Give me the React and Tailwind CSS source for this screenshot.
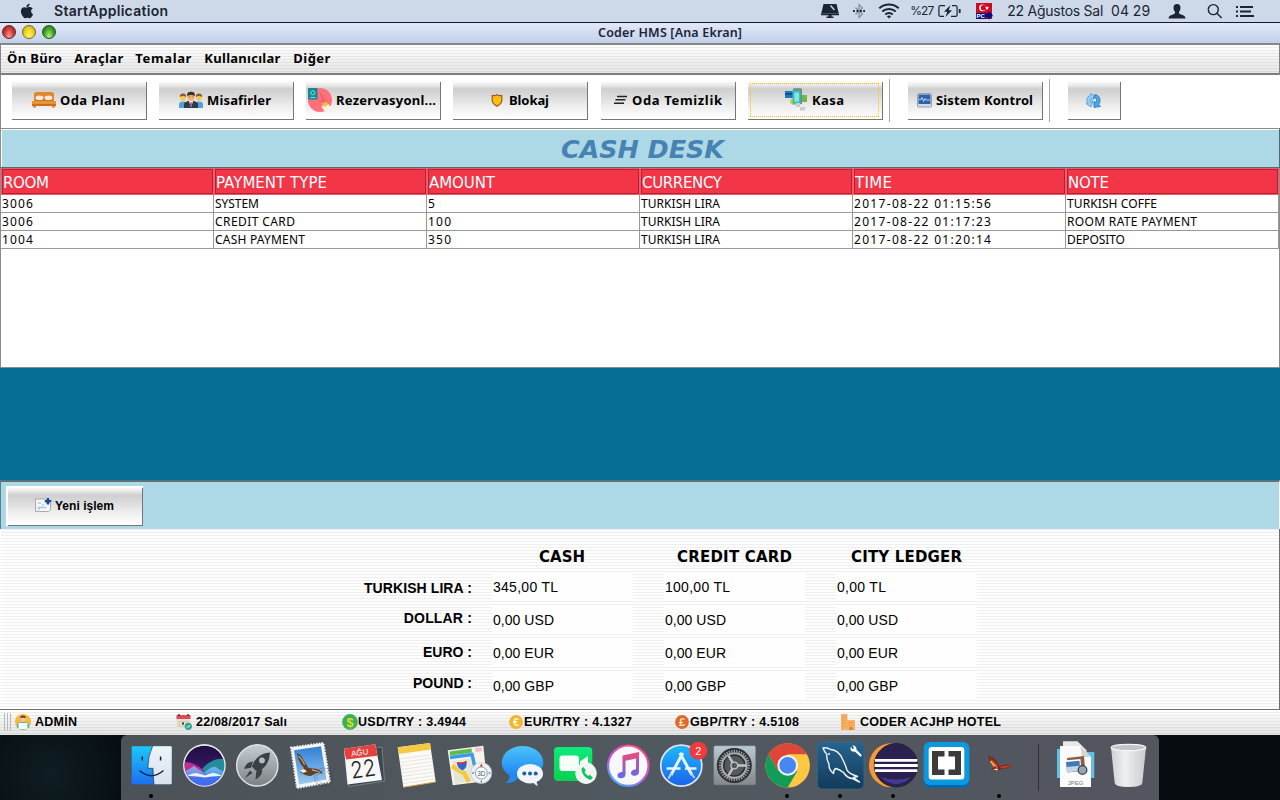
import React, { useLayoutEffect, useRef, useState } from "react";

const LUCIDA = "font-['Noto_Sans','Open_Sans',sans-serif]";
const VERDANA = "font-['DejaVu_Sans',sans-serif]";
const ARIAL = "font-['Liberation_Sans',Arial,sans-serif]";
const SYSTEM = "font-[Inter,Roboto,sans-serif]";

/* A label whose tracking is set so that it fills exactly `w` pixels. */
function Label({ w, className = "", children }) {
  const ref = useRef(null);
  const [spacing, setSpacing] = useState(0);
  useLayoutEffect(() => {
    const natural = ref.current.getBoundingClientRect().width;
    setSpacing((w - natural) / Math.max(1, String(children).length - 1));
  }, []);
  return (
    <span ref={ref} className={"inline-block shrink-0 whitespace-pre " + className} style={{ letterSpacing: spacing + "px" }}>
      {children}
    </span>
  );
}

/* ---------- system menu bar ---------- */

function MenuBar() {
  return (
    <header className={"flex h-[23px] items-center border-b border-[#101b30] bg-[#cdd9e8] pl-5 text-[#1b2431] " + SYSTEM}>
      <svg className="h-[16px] w-[14px] shrink-0" viewBox="0 0 14 16" fill="#1b2431">
        <path d="M9.6 0.6c.1 1.2-.4 2-1 2.700-.6.700-1.400 1.100-2.200 1-.1-1 .4-1.900.9-2.500C7.900 1.100 8.800.700 9.600.6zM12.700 5.600c-1 .6-1.600 1.500-1.600 2.700 0 1.400.8 2.400 2 2.900-.3.900-.8 1.800-1.400 2.600-.6.800-1.200 1.500-2.100 1.500-.9 0-1.200-.5-2.200-.5s-1.400.5-2.200.5c-.9 0-1.600-.8-2.200-1.700C1.800 12 .9 10 .9 8.200c0-2.600 1.700-4 3.300-4 .9 0 1.700.6 2.500.6.7 0 1.600-.7 2.800-.7 1.200 0 2.400.5 3.200 1.500z" />
      </svg>
      <Label w={114} className="ml-[20px] text-[14px] leading-[22px] font-semibold">StartApplication</Label>
      <svg className="ml-[653px] h-[16px] w-[18px] shrink-0" viewBox="0 0 18 16" fill="#1b2431">
        <path d="M2.500 1h13l2.300 9.500H.2z" />
        <path d="M0 10.500h18v1.700H0zM7.500 12h3v2h-3zM5.500 13.500h7V15h-7z" />
        <path d="M9.500 2.500l4 4.500" stroke="#cdd9e8" strokeWidth="1.400" />
      </svg>
      <svg className="ml-[14px] h-[16px] w-[12px] shrink-0" viewBox="0 0 12 16" fill="none" stroke="#7c8899" strokeWidth="1.100">
        <path d="M2.500 4.500l7 6.500L6 14.500v-13l3.500 3.500-7 6.500" />
        <path d="M0 8h1.800M3.500 8h1.800M7 8h1.800M10.200 8H12" stroke="#1b2431" strokeWidth="2" />
      </svg>
      <svg className="ml-[13px] h-[16px] w-[22px] shrink-0" viewBox="0 0 22 16" fill="none" stroke="#1b2431" strokeWidth="2">
        <path d="M1.300 5.200c5.500-5 13.900-5 19.400 0" />
        <path d="M4.300 8.500c3.800-3.400 9.600-3.400 13.400 0" />
        <path d="M7.300 11.600c2.200-1.900 5.200-1.900 7.400 0" />
        <path d="M8.800 13.200l2.200 2.300 2.200-2.300c-1.300-1.100-3.100-1.100-4.400 0z" fill="#1b2431" stroke="none" />
      </svg>
      <Label w={24} className="ml-[10px] text-[12px] leading-[22px]">%27</Label>
      <svg className="ml-[5px] h-[14px] w-[23px] shrink-0" viewBox="0 0 23 14" fill="none" stroke="#1b2431" strokeWidth="1.200">
        <path d="M7 1.600H2.500Q.9 1.600.9 3v8q0 1.400 1.600 1.400H6M14 1.600h3.500q1.600 0 1.600 1.400v8q0 1.400-1.600 1.400H13" />
        <path d="M12.500 1L6 7.800h3.300L7.500 13 14 6.200h-3.300z" fill="#1b2431" stroke="none" />
        <path d="M21.700 5v4" strokeWidth="1.800" />
      </svg>
      <svg className="ml-[15px] h-[17px] w-[17px] shrink-0" viewBox="0 0 17 17">
        <path d="M0 0h16v16H0z" fill="#d00a20" />
        <circle cx="6.500" cy="4.800" r="3.400" fill="#fff" />
        <circle cx="7.500" cy="4.800" r="2.700" fill="#d00a20" />
        <path d="M11 2.800l.6 1.400 1.500.1-1.200.9.400 1.500-1.300-.8-1.300.8.400-1.500-1.100-.9 1.500-.1z" fill="#fff" />
        <path d="M0 10h10v6H0z" fill="#0a0f86" />
        <text x="0.500" y="15.300" fontSize="6" fontWeight="700" fill="#fff" fontFamily="Liberation Sans, sans-serif">PC</text>
        <path d="M13 8.500l1.500 1.500 1.500 1 .8 1.500-.8 1.500-1.500 1-1.500 1.500-1.500-1.500-1.500-1-.8-1.500.8-1.500 1.500-1z" fill="#0a0f86" />
      </svg>
      <Label w={96} className="ml-[14px] text-[14px] leading-[22px]">22 Ağustos Sal</Label>
      <Label w={39} className="ml-[8px] text-[14px] leading-[22px]">04 29</Label>
      <svg className="ml-[18px] h-[17px] w-[18px] shrink-0" viewBox="0 0 18 17" fill="#1b2431">
        <path d="M9 1c2.400 0 3.600 1.600 3.500 4-.1 1.900-.8 3.200-1.600 4 .1 1.700.6 2 2.800 2.700 2.200.7 3.600 1.500 3.800 3.800H.5c.2-2.300 1.600-3.100 3.800-3.800 2.200-.7 2.700-1 2.800-2.700-.8-.8-1.500-2.100-1.600-4C5.400 2.600 6.600 1 9 1z" />
      </svg>
      <svg className="ml-[21px] h-[16px] w-[16px] shrink-0" viewBox="0 0 16 16" fill="none" stroke="#1b2431" strokeWidth="1.400">
        <circle cx="6.300" cy="6.600" r="5" />
        <path d="M9.900 10.200l4.800 4.800" />
      </svg>
      <svg className="ml-[13px] h-[14px] w-[18px] shrink-0" viewBox="0 0 18 14" stroke="#1b2431" strokeWidth="2">
        <path d="M0 3h2M4 3h13M0 7.500h2M4 7.500h11M0 12h2M4 12h14" />
      </svg>
    </header>
  );
}

/* ---------- window chrome ---------- */

function TitleBar() {
  return (
    <div className="grid h-[20px] grid-cols-[598px_1fr] items-center bg-linear-to-b from-[#e3e9f8] to-[#c0d0ea]">
      <div className="flex items-center gap-[6px] pb-[2px] pl-[2px]">
        <span className="h-[14px] w-[14px] rounded-full border border-[#6d2020] bg-[radial-gradient(ellipse_at_50%_85%,#ff9a90_0%,#d34040_50%,#a32828_80%)]" />
        <span className="h-[14px] w-[14px] rounded-full border border-[#7d6a16] bg-[radial-gradient(ellipse_at_50%_85%,#fff36b_0%,#efd62f_50%,#c9a723_85%)]" />
        <span className="h-[14px] w-[14px] rounded-full border border-[#1e5a16] bg-[radial-gradient(ellipse_at_50%_85%,#b4f27a_0%,#4ea52f_50%,#2a7a20_80%)]" />
      </div>
      <Label w={144} className={"justify-self-start text-[12.500px] leading-[18px] font-semibold text-[#1c2536] " + LUCIDA}>Coder HMS [Ana Ekran]</Label>
    </div>
  );
}

const stripes = "bg-[linear-gradient(to_bottom,transparent_2px,#0000000f_2px)] bg-[length:100%_3px]";

function AppMenu() {
  const cls = "text-[13px] leading-[26px] font-bold text-black " + LUCIDA;
  return (
    <div className="h-[32px] border-x border-t-2 border-b-2 border-x-[#858585] border-t-[#858585] border-b-[#7d7d7d] bg-linear-to-b from-white to-[#e6e6e6]">
      <nav className={"flex h-full items-center pb-[2px] pl-[6px] " + stripes}>
        <Label w={55} className={cls}>Ön Büro</Label>
        <div className="flex w-[68px] shrink-0 pl-[12px]"><Label w={49} className={cls}>Araçlar</Label></div>
        <div className="flex w-[69px] shrink-0 pl-[5px]"><Label w={56} className={cls}>Temalar</Label></div>
        <div className="flex w-[89px] shrink-0 pl-[5px]"><Label w={76} className={cls}>Kullanıcılar</Label></div>
        <div className="flex shrink-0 pl-[5px]"><Label w={37} className={cls}>Diğer</Label></div>
      </nav>
    </div>
  );
}

/* ---------- toolbar ---------- */

const metal =
  "border-r border-b border-[#767676] bg-[linear-gradient(to_bottom,#f8f8f8_0%,#e9e9e9_9%,#cfcfcf_19%,#d6d6d6_32%,#ebebeb_62%,#f8f8f8_86%,#fff_100%)]";

function ToolButton({ className, children }) {
  return <button className={"relative flex h-[38px] shrink-0 items-center pb-px text-[13px] leading-[34px] font-bold text-black " + metal + " " + LUCIDA + " " + className}>{children}</button>;
}

function BedIcon() {
  return (
    <svg className="h-[24px] w-[24px] shrink-0" viewBox="0 0 24 24">
      <path d="M3.500 4h17l1.500 1.500V14H2V5.500z" fill="#e2882c" />
      <path d="M3 9q4.500-4 9 0 4.500-4 9 0v4H3z" fill="#d8761c" />
      <path d="M0 13h24v3H0z" fill="#e8923a" />
      <path d="M0 16h24v2H0z" fill="#c9701c" />
      <path d="M1 18h3v1.500H1zM20 18h3v1.500h-3z" fill="#e2882c" />
      <ellipse cx="7.500" cy="9.800" rx="4" ry="2.300" fill="#fbe9de" />
      <ellipse cx="16.500" cy="9.800" rx="4" ry="2.300" fill="#fbe9de" />
    </svg>
  );
}

function GuestsIcon() {
  return (
    <svg className="h-[24px] w-[24px] shrink-0" viewBox="0 0 24 24">
      <path d="M0 20v-4q0-2.500 4-2.500t4 2.500v4zM16 20v-4q0-2.500 4-2.500t4 2.500v4z" fill="#4fa3d8" />
      <ellipse cx="4" cy="9.500" rx="2.900" ry="3.700" fill="#f8c95c" />
      <ellipse cx="20" cy="9.500" rx="2.900" ry="3.700" fill="#f8c95c" />
      <path d="M.9 9Q.5 5.500 4 5.500T7.100 9Q4 7 .9 9zM16.900 9Q16.500 5.500 20 5.500T23.100 9Q20 7 16.900 9z" fill="#8a5a30" />
      <path d="M5 20v-4q0-2.500 7-3.500 7 1 7 3.500v4z" fill="#2d3b52" />
      <path d="M9.800 12.500h4.400L12 19.500z" fill="#fff" />
      <path d="M11.500 14h1l.5 3-1 1.500-1-1.500z" fill="#c33" />
      <ellipse cx="12" cy="8.500" rx="3.600" ry="4.500" fill="#f8b878" />
      <path d="M8.200 8Q7.500 3.800 12 3.800T15.800 8Q12 5.800 8.200 8z" fill="#3a2f2a" />
      <path d="M9.200 9h2.200M12.600 9h2.200" stroke="#a06a40" strokeWidth=".8" />
    </svg>
  );
}

function ReservationIcon() {
  return (
    <svg className="h-[24px] w-[24px] shrink-0" viewBox="0 0 24 24">
      <circle cx="12" cy="12" r="12" fill="#ff7078" />
      <path d="M12 6q3 0 3 7h3M11 13h3" fill="none" stroke="#e05560" />
      <path d="M0 0h9.500v11.500H0z" fill="#168a99" />
      <circle cx="4.800" cy="4.800" r="2" fill="none" stroke="#8adbd2" />
      <path d="M2.500 9.500h5" stroke="#8adbd2" />
      <path d="M13.500 19l3-4 4 1 2 3-2 4-4 0z" fill="#fff1e6" />
      <path d="M14 16l4-2.500 2 3-3 2.500z" fill="#f9ba35" />
    </svg>
  );
}

function KasaIcon() {
  return (
    <svg className="h-[24px] w-[23px] shrink-0" viewBox="0 0 23 24">
      <path d="M0 3h10v7H0z" fill="#1b78be" />
      <path d="M0 5h9v1.800H0z" fill="#12507f" />
      <circle cx="8" cy="13.500" r="3" fill="#f5bd2f" />
      <path d="M14 7h8v7h-8z" fill="#70b84a" />
      <path d="M8 1.500Q8 .3 9.500.3h6q1.500 0 1.500 1.500V16H8z" fill="#6f8a94" />
      <path d="M7.500 2.500h8v14h-8z" fill="#35c5b8" />
      <path d="M9.500 4.500h4.500v9H9.500z" fill="#8ce5dc" />
      <path d="M11 15h4v4h-4zM15 19h5v3.500h-5z" fill="#cdcdcd" />
    </svg>
  );
}

function Separator({ className }) {
  return <span className={"mt-[-3px] h-[43px] w-px shrink-0 bg-[#a8a8a8] " + className} />;
}

function Toolbar() {
  return (
    <div className="flex h-[53px] items-start border-l border-[#8c8c8c] bg-white pt-[7px] pl-[11px]">
      <ToolButton className="w-[135px] gap-[4px] pl-[20px]"><BedIcon /><Label w={65}>Oda Planı</Label></ToolButton>
      <ToolButton className="ml-[12px] w-[135px] gap-[4px] pl-[20px]"><GuestsIcon /><Label w={64}>Misafirler</Label></ToolButton>
      <ToolButton className="ml-[12px] w-[135px] gap-[4px] pl-[2px]"><ReservationIcon /><Label w={100}>Rezervasyonl...</Label></ToolButton>
      <ToolButton className="ml-[12px] w-[135px] gap-[6px] pl-[38px]">
        <svg className="h-[13px] w-[12px] shrink-0" viewBox="0 0 12 13">
          <path d="M6 .7l2 1h2.800v4.600q0 3.500-4.800 6-4.800-2.500-4.800-6V1.700H4z" fill="#fbbf10" stroke="#9a5a1c" strokeWidth="1.200" />
        </svg>
        <Label w={40}>Blokaj</Label>
      </ToolButton>
      <ToolButton className="ml-[13px] w-[135px] gap-[5px] pl-[13px]">
        <svg className="h-[10px] w-[13px] shrink-0" viewBox="0 0 13 10" stroke="#222" strokeWidth="1.500">
          <path d="M3 1.500h10M1.500 4.800h10M0 8.200h10" />
        </svg>
        <Label w={90}>Oda Temizlik</Label>
      </ToolButton>
      <ToolButton className="ml-[12px] w-[135px] gap-[4px] pl-[37px]">
        <KasaIcon />
        <Label w={32}>Kasa</Label>
        <svg className="absolute top-px left-[2px] h-[34px] w-[129px]" viewBox="0 0 129 34" shapeRendering="crispEdges">
          <path d="M0 .5h129M0 33.500h129M.5 0v34M128.500 0v34" stroke="#fcc100" strokeDasharray="1 1" />
        </svg>
      </ToolButton>
      <Separator className="ml-[6px]" />
      <ToolButton className="ml-[18px] w-[135px] gap-[4px] pl-[9px]">
        <svg className="h-[15px] w-[15px] shrink-0" viewBox="0 0 15 15">
          <rect x=".5" y=".5" width="14" height="13.500" rx="1" fill="#d3d8e2" stroke="#9aa2b2" />
          <path d="M1.500 1.500h12v9.500h-12z" fill="#2b62a8" />
          <path d="M2 6.500h2l1-2 1.500 4 1.500-3 1 1.500h4" fill="none" stroke="#d6f0ff" strokeWidth=".8" />
        </svg>
        <Label w={97}>Sistem Kontrol</Label>
      </ToolButton>
      <Separator className="ml-[6px]" />
      <ToolButton className="ml-[18px] w-[53px] pl-[18px]">
        <svg className="h-[15px] w-[15px] shrink-0" viewBox="0 0 15 15">
          <path d="M4.500 .8L9.500 3 6 7.500 5.300 5.500Q3 6.800 4.500 9L7 8.500 5 14 0 10.500 1.500 10Q-1 5 4 2.500z" fill="#8fd0f5" stroke="#3c90cc" strokeWidth=".7" />
          <path d="M9 1.500q5 1 5 6 0 2.200-1.300 3.800l1.800 2.200-6.500 1V8.300l2 1.500q1.700-2.800-.5-5L7.500 5z" fill="#4ba7e6" stroke="#1d66ac" strokeWidth=".7" />
        </svg>
      </ToolButton>
    </div>
  );
}

/* ---------- cash desk ---------- */

const columns = [["ROOM", 46], ["PAYMENT TYPE", 111], ["AMOUNT", 66], ["CURRENCY", 80], ["TIME", 37], ["NOTE", 41]];
const rows = [
  [["3006", 31], ["SYSTEM", 44], ["5", 7], ["TURKISH LIRA", 79], ["2017-08-22 01:15:56", 137], ["TURKISH COFFE", 90]],
  [["3006", 31], ["CREDIT CARD", 80], ["100", 23], ["TURKISH LIRA", 79], ["2017-08-22 01:17:23", 137], ["ROOM RATE PAYMENT", 130]],
  [["1004", 31], ["CASH PAYMENT", 90], ["350", 23], ["TURKISH LIRA", 79], ["2017-08-22 01:20:14", 137], ["DEPOSITO", 58]],
];

function CashTable() {
  return (
    <section className="h-[200px] border-x border-b border-[#8c8c8c] bg-white">
      <div className="grid grid-cols-[repeat(6,213px)] bg-[#f23648]">
        {columns.map(([name, w]) => (
          <div key={name} className="flex h-[27px] items-center border border-[#ff5566]">
            <div className="flex h-full w-full items-center border border-[#a92634] pt-[3px]">
              <Label w={w} className={"text-[15px] leading-[22px] text-white " + VERDANA}>{name}</Label>
            </div>
          </div>
        ))}
      </div>
      {rows.map((row, i) => (
        <div key={i} className="grid grid-cols-[repeat(6,213px)]">
          {row.map(([text, w], j) => (
            <div key={j} className="flex h-[18px] items-center border-r border-b border-[#999] pl-[1px]">
              <Label w={w} className={"text-[12px] leading-[17px] text-black " + LUCIDA}>{text}</Label>
            </div>
          ))}
        </div>
      ))}
    </section>
  );
}

const totals = [
  ["TURKISH LIRA :", 108, [["345,00 TL", 65], ["100,00 TL", 65], ["0,00 TL", 49]], "pt-[3px]"],
  ["DOLLAR :", 68, [["0,00 USD", 61], ["0,00 USD", 61], ["0,00 USD", 61]], "pb-[3px]"],
  ["EURO :", 49, [["0,00 EUR", 61], ["0,00 EUR", 61], ["0,00 EUR", 61]], "pb-[1px]"],
  ["POUND :", 59, [["0,00 GBP", 61], ["0,00 GBP", 61], ["0,00 GBP", 61]], "pb-[5px]"],
];

function Totals() {
  return (
    <section className="h-[181px] border-r border-b border-[#6f6f6f] bg-[#fefefe] pl-px">
      <div className={"h-[180px] bg-[position:0_1px] pt-[18px] " + stripes}>
        <div className="flex h-[20px] items-center">
          {[["CASH", 46, "ml-[538px] w-[138px]"], ["CREDIT CARD", 115, "w-[174px]"], ["CITY LEDGER", 111, ""]].map(([t, w, c]) => (
            <div key={t} className={"flex shrink-0 " + c}>
              <Label w={w} className={"text-[15px] leading-[20px] font-bold text-black " + VERDANA}>{t}</Label>
            </div>
          ))}
        </div>
        <div className="mt-[5px] flex flex-col gap-[4px]">
          {totals.map(([name, w, values, shift]) => (
            <div key={name} className={"grid h-[29px] grid-cols-[471px_141px_141px_141px] items-center text-black " + ARIAL}>
              <div className={"flex justify-end " + shift}>
                <Label w={w} className="text-[14px] leading-[20px] font-bold">{name}</Label>
              </div>
              {values.map(([v, vw], i) => (
                <div key={i} className={"flex h-[29px] items-center bg-[#fefefe] pl-px " + ["translate-x-[20px]", "translate-x-[51px]", "translate-x-[82px]"][i]}>
                  <Label w={vw} className="text-[14px] leading-[20px]">{v}</Label>
                </div>
              ))}
            </div>
          ))}
        </div>
      </div>
    </section>
  );
}

/* ---------- status bar ---------- */

function Coin({ sign, fill, ink, size }) {
  return (
    <svg className={"shrink-0 " + size} viewBox="0 0 16 16">
      <circle cx="8" cy="8" r="7.900" fill={fill} />
      <text x="8" y="12.500" textAnchor="middle" fontSize="12.500" fontWeight="700" fill={ink} fontFamily="Liberation Sans, sans-serif">{sign}</text>
    </svg>
  );
}

function StatusBar() {
  const item = "flex shrink-0 items-center ";
  return (
    <footer className="h-[25px] bg-linear-to-b from-white to-[#e4e4e4]">
      <div className={"flex h-full items-center pb-px pl-[4px] text-[12.500px] leading-[22px] font-bold text-black " + stripes + " " + ARIAL}>
        <div className="flex w-[11px] shrink-0 gap-[2px]">
          {[0, 1, 2].map((i) => <span key={i} className="h-[18px] w-px bg-[#b9b9b9]" />)}
        </div>
        <div className={item + "w-[161px] gap-[4px]"}>
          <svg className="h-[16px] w-[16px] shrink-0" viewBox="0 0 16 16">
            <circle cx="8" cy="8" r="8" fill="#fbb738" />
            <path d="M2 14V10.500Q2 8 8 8t6 2.500V14q-6 3-12 0z" fill="#3dbb9f" />
            <circle cx="8" cy="5" r="2.700" fill="#f0c39c" />
            <path d="M5.300 4Q5 1.500 8 1.500T10.700 4Q8 2.800 5.300 4z" fill="#4d3b30" />
            <path d="M3.500 9h9v6h-9z" fill="#f7fbff" />
          </svg>
          <Label w={42}>ADMİN</Label>
        </div>
        <div className={item + "w-[166px] gap-[4px]"}>
          <svg className="h-[16px] w-[16px] shrink-0" viewBox="0 0 16 16">
            <path d="M.5 1h14v13.500H.5z" fill="#e6e0d0" />
            <path d="M.5 1h14v4H.5z" fill="#dd4b5a" />
            <path d="M3 0v2M12 0v2" stroke="#5a3038" strokeWidth="1.500" />
            <path d="M3 7.500h9v4.500H3z" fill="none" stroke="#cfc8b6" />
            <path d="M6 9.500h2" stroke="#333" strokeWidth="2" />
            <circle cx="12.300" cy="12.300" r="3.600" fill="#2aa890" />
            <path d="M10.700 12.300l1.200 1.200 2-2.300" fill="none" stroke="#fff" />
          </svg>
          <Label w={91}>22/08/2017 Salı</Label>
        </div>
        <div className={item + "w-[167px]"}>
          <Coin sign="$" fill="#3fae5c" ink="#d9e021" size="h-[16px] w-[16px]" />
          <Label w={108}>USD/TRY : 3.4944</Label>
        </div>
        <div className={item + "w-[166px] gap-px"}>
          <Coin sign="€" fill="#f2b632" ink="#fff7cf" size="h-[14px] w-[14px]" />
          <Label w={108}>EUR/TRY : 4.1327</Label>
        </div>
        <div className={item + "w-[166px] gap-px"}>
          <Coin sign="£" fill="#dd6a2c" ink="#ffe9d2" size="h-[14px] w-[14px]" />
          <Label w={109}>GBP/TRY : 4.5108</Label>
        </div>
        <div className={item + "gap-[5px]"}>
          <svg className="h-[16px] w-[14px] shrink-0" viewBox="0 0 14 16">
            <path d="M0 0h6.500v16H0zM6 6h8v10H6z" fill="#f5b068" />
            <path d="M1.500 3h3.500M1.500 6h3.500M1.500 9h3.500M1.500 12h3.500M7.500 8.500h5M7.500 11h5" stroke="#f08f2e" strokeWidth="1.200" strokeDasharray="1.500 .8" />
            <path d="M8.500 13h3v3h-3z" fill="#e07f22" />
          </svg>
          <Label w={141}>CODER ACJHP HOTEL</Label>
        </div>
      </div>
    </footer>
  );
}

/* ---------- dock ---------- */

function Slot({ running, children }) {
  return (
    <svg className="h-[65px] w-[53px] shrink-0" viewBox="0 0 53 65">
      {children}
      {running && <circle cx="26" cy="61" r="2" fill="#000" />}
    </svg>
  );
}

function Gradient({ id, from, to }) {
  return (
    <linearGradient id={id} x1="0" y1="0" x2="0" y2="1">
      <stop offset="0" stopColor={from} />
      <stop offset="1" stopColor={to} />
    </linearGradient>
  );
}

const sans = "Liberation Sans, sans-serif";
const gearTeeth = Array.from({ length: 36 }, (_, i) => i * 10);

function Dock() {
  return (
    <div className="flex h-[65px] bg-[#060c10] bg-[radial-gradient(circle_at_50px_40px,#0f1d22_0px,transparent_90px)] pl-[121px]">
      <div className="flex w-[1038px] rounded-t-[6px] bg-linear-to-r from-[#4d5259] via-[#50595f] to-[#53555f] pl-[4px]">
        <Slot running>
          <defs>
            <Gradient id="finder" from="#1bc8fb" to="#1d6ff0" />
            <Gradient id="finderR" from="#eef3f9" to="#d9e2ee" />
          </defs>
          <rect x="6.700" y="11.300" width="40" height="38" rx="1" fill="url(#finder)" />
          <path d="M27.700 11.300h18q1 0 1 1v36q0 1-1 1H29q-.8-6.500-1-16h-5q-.3-12 4.700-22z" fill="url(#finderR)" />
          <path d="M27.500 11.300q-4.800 10-4.500 22h5q0 9 1 16" fill="none" stroke="#1d3550" strokeWidth=".7" />
          <path d="M17.300 21.500v4M35.600 21.500v4" stroke="#10243c" strokeWidth="1.500" />
          <path d="M14.500 35.500q12 10.500 24 0" fill="none" stroke="#10243c" strokeWidth="1.400" />
        </Slot>
        <Slot>
          <defs>
            <Gradient id="siri" from="#1d0f3c" to="#4a1c84" />
            <Gradient id="siriLow" from="#7fc8ff" to="#3d5cf0" />
            <clipPath id="siriClip"><circle cx="26.400" cy="30.400" r="20" /></clipPath>
          </defs>
          <circle cx="26.400" cy="30.400" r="21.300" fill="#e8ecf2" />
          <g clipPath="url(#siriClip)">
            <circle cx="26.400" cy="30.400" r="20" fill="url(#siri)" />
            <path d="M5 27q10-1 20 8l-4 8-16-2z" fill="#e0359b" opacity=".8" />
            <path d="M24 34q10-12 24-10v20l-18-4z" fill="#1fb5b0" opacity=".75" />
            <path d="M5 37q7-3 11-6 6 5 11 6 7-6 11-5 5 5 10 4v18H5z" fill="url(#siriLow)" opacity=".8" />
            <path d="M5 42q11-2 21 1 11-3 22-1v10H5z" fill="#3f6ef5" opacity=".8" />
            <path d="M9 41q5-3 9-3 6 1 9 2.500 6-3 9-2.500 5 1 8 3-9-.5-17 1.500-9-2-18-1.500z" fill="#f2fbff" opacity=".95" />
          </g>
        </Slot>
        <Slot>
          <defs><Gradient id="launch" from="#c6ced4" to="#7c8084" /></defs>
          <circle cx="26.300" cy="30.400" r="20.600" fill="url(#launch)" stroke="#dfe4e8" strokeWidth="1.400" />
          <g fill="#3a4047">
            <path d="M38.800 17.500q.5 10.500-8.500 17.500l-4 2-5.500-5.500 2-4.500q6-9 16-9.500z" />
            <path d="M22 26.500q-6.500 0-9 7.500l7-1.200zM31.300 34.800q.2 6-6.800 9.700l.7-7.700z" />
            <path d="M19 35.500l-5 7.500 7.500-5z" />
          </g>
          <circle cx="31" cy="25.500" r="2.900" fill="#b4bcc2" />
        </Slot>
        <Slot>
          <defs><Gradient id="mail" from="#2f7fd6" to="#9ccaf0" /></defs>
          <path d="M7 12.600L39.300 8 46 47l-33 6z" fill="#f6f6f4" stroke="#f6f6f4" strokeWidth="2" strokeDasharray="1.600 1.200" />
          <path d="M10 15.300l27-4 5.500 33.200-27.500 5z" fill="url(#mail)" />
          <path d="M13 18q5 2 7 8 3 4 4 6.500l4 1q7-.5 11 5l-7-.5-5 3q-6 0-11-4 3-1 4-4Q14 27 13 18z" fill="#5f4228" />
          <path d="M14.500 21q4 3 6 9M28 35q5 .5 8 2.500" stroke="#c3a078" strokeWidth="1.300" fill="none" />
          <path d="M16 35.500l4-1.500 3 2.500-4 1.500z" fill="#f4ece0" />
          <circle cx="39.500" cy="42" r="9" fill="none" stroke="#323c48" strokeOpacity=".35" />
          <circle cx="39.500" cy="42" r="6.500" fill="none" stroke="#323c48" strokeOpacity=".35" strokeDasharray="2 1" />
        </Slot>
        <Slot>
          <path d="M10 17l35-5 2.500 34-36 5.500z" fill="#3e484c" stroke="#7b8d92" strokeWidth=".8" />
          <path d="M7 13.700L38.300 9.300 45 45l-34.500 4.500z" fill="#f7f7f7" />
          <path d="M7 13.700L38.300 9.300l2 11.500L9 24.500z" fill="#e63f3f" />
          <g transform="rotate(-8 26 30)" fontFamily={sans} textAnchor="middle">
            <text x="24.500" y="20" fontSize="8" fill="#fff">AĞU</text>
            <text x="25.500" y="42" fontSize="23" fill="#222" fontFamily="Inter, sans-serif" fontWeight="300" textLength="25" lengthAdjust="spacingAndGlyphs">22</text>
          </g>
        </Slot>
        <Slot>
          <path d="M7.700 12.300L40 8l5.700 39-32.400 5.300z" fill="#fbfaf6" />
          <path d="M7.700 12.300L40 8l1 6.500L8.700 19z" fill="#f6c944" />
          <path d="M9.600 24l32.300-4.500M10 27.500L42.300 23M10.500 31l32.300-4.500M11 34.500L43.300 30M11.500 38l32.300-4.500M12 41.500L44.300 37M12.600 45l32.300-4.500M13 48.500L45.200 44" stroke="#dedcd6" strokeWidth=".7" />
          <path d="M13.300 52.300L45.700 47" stroke="#c9a040" />
        </Slot>
        <Slot>
          <path d="M4.700 15.300l35.600-4.600L44 46 9.700 50.300z" fill="#f6f3ea" />
          <path d="M6.500 16.500l22-3 .5 4-22 3z" fill="#5dbb4a" />
          <path d="M32 13l6.500-.8.6 4-6.500.8z" fill="#f2bcc8" />
          <path d="M7 22.500l22-3 3 13" fill="none" stroke="#3b9be8" strokeWidth="3.500" />
          <path d="M9 26l19-2.500L31 46l-19 3z" fill="#e3e6d6" />
          <path d="M9 31q8 5 12 7l5 9" fill="none" stroke="#f6c83c" strokeWidth="4.500" />
          <path d="M13.500 27q4.500 1.500 10-1.500 2.500 7-4 10.500Q13 33 13.500 27z" fill="#3366cc" stroke="#fff" strokeWidth=".8" />
          <path d="M13.800 27.800q5 1 9.800-1.300" stroke="#d33" strokeWidth="1.600" fill="none" />
          <circle cx="38.300" cy="38" r="10.500" fill="#eef0f3" stroke="#c0c4c9" strokeWidth=".6" />
          <circle cx="38.300" cy="38" r="6" fill="#fff" stroke="#6f9db4" strokeWidth=".9" />
          <text x="38.300" y="40.500" fontSize="6.500" fill="#555" textAnchor="middle" fontFamily={sans}>3D</text>
          <path d="M38.300 28.500l1.500 3h-3z" fill="#e03030" />
          <path d="M38.300 45.500v2M29 38h2M45.600 38h2" stroke="#555" />
        </Slot>
        <Slot>
          <defs><Gradient id="msg" from="#4cc3fb" to="#1a7ef2" /></defs>
          <ellipse cx="26.500" cy="27.500" rx="20.800" ry="16.500" fill="url(#msg)" />
          <path d="M14 39q0 6-4 9 8 0 12-5z" fill="#2589f4" />
          <ellipse cx="34" cy="38.700" rx="13" ry="9.700" fill="#f1f5f9" />
          <path d="M37 46q1 4 5 5-2-3-1-7z" fill="#f1f5f9" />
          <g fill="#17649e"><circle cx="28.300" cy="38.500" r="2" /><circle cx="34" cy="38.500" r="2" /><circle cx="39.700" cy="38.500" r="2" /></g>
        </Slot>
        <Slot>
          <defs><Gradient id="ft" from="#0ceb7c" to="#0bd050" /></defs>
          <rect x="5" y="12" width="38.300" height="34" rx="4" fill="url(#ft)" />
          <rect x="10.500" y="20.500" width="19.500" height="15.500" rx="3" fill="#f5fff8" />
          <path d="M31 26.500l8-5.500v14l-8-4z" fill="#f5fff8" />
          <circle cx="37" cy="38.300" r="10.700" fill="#f2f4f4" />
          <path d="M32.500 33.500l2-1.500 2.300 3.500-1.300 1.500q1.200 2.500 3.700 4l1.600-1.200 3 2.700-1.500 2q-2.500.8-6-2.500-3.800-3.500-3.800-8.500z" fill="#0fc55a" />
        </Slot>
        <Slot>
          <defs>
            <linearGradient id="itRing" x1=".8" y1="0" x2=".2" y2="1"><stop offset="0" stopColor="#fb4a6b" /><stop offset=".55" stopColor="#c653e8" /><stop offset="1" stopColor="#38b8fa" /></linearGradient>
            <Gradient id="itNote" from="#f34a7c" to="#5a6cf0" />
          </defs>
          <circle cx="26.300" cy="30.700" r="20.200" fill="#f8f8fb" stroke="url(#itRing)" strokeWidth="2.200" />
          <path d="M20.500 20.500L37 17v19.500q0 3.800-4 4.200-4 .3-4-2.700t5-3.700V23.500l-10.500 2.300V39q0 3.800-4 4.200-4 .3-4-2.700t5-3.700z" fill="url(#itNote)" />
        </Slot>
        <Slot>
          <defs><Gradient id="as" from="#1cb9fa" to="#1c62ec" /></defs>
          <circle cx="26.300" cy="30.700" r="20.500" fill="url(#as)" stroke="#dfe6ee" strokeWidth="1.700" />
          <path d="M27.800 18L16 40M24.800 18L37 40" stroke="#e9f3fd" strokeWidth="3" />
          <path d="M11.500 33.500h14M30 33.500h11.500" stroke="#e9f3fd" strokeWidth="2.600" />
          <path d="M16.500 38l-3 5.500M36 38l3.500 5" stroke="#b9d5f5" strokeWidth="2" />
          <circle cx="43.300" cy="15.700" r="9" fill="#f03a3c" />
          <text x="43.300" y="19.500" fontSize="11" fill="#fff" textAnchor="middle" fontFamily={sans}>2</text>
        </Slot>
        <Slot>
          <defs><Gradient id="sp" from="#b9cad2" to="#84888c" /></defs>
          <rect x="5.700" y="10.700" width="42" height="39.300" rx="1.500" fill="url(#sp)" stroke="#6c7276" strokeWidth=".5" />
          <circle cx="26.300" cy="30.500" r="17.500" fill="#2c2f31" />
          {gearTeeth.map((a) => <path key={a} d="M25.700 14.800h1.200v2.500h-1.200z" fill="#a6abae" transform={`rotate(${a} 26.300 30.500)`} />)}
          <circle cx="26.300" cy="30.500" r="12.300" fill="none" stroke="#a9adb0" strokeWidth="2" />
          <circle cx="26.300" cy="30.500" r="9.800" fill="#55595c" />
          <path d="M26.300 30.500L20.500 20.500M26.300 30.500h12M26.300 30.500l-5.800 10" stroke="#c2c6c8" strokeWidth="2.400" />
          <circle cx="26.300" cy="30.500" r="3.400" fill="#55595c" stroke="#c2c6c8" strokeWidth="1.300" />
        </Slot>
        <Slot running>
          <circle cx="26.700" cy="30.400" r="22.200" fill="#fdc741" />
          <path d="M7.500 19.300A22.200 22.200 0 0 1 45.900 19.300H26.700L17.100 36z" fill="#dd4638" />
          <path d="M7.500 19.300A22.200 22.200 0 0 0 26.700 52.600L36.300 36H17.100z" fill="#119d58" />
          <circle cx="26.700" cy="30.400" r="10.300" fill="#f3f3f3" />
          <circle cx="26.700" cy="30.400" r="8.300" fill="#4687f0" />
        </Slot>
        <Slot running>
          <defs><Gradient id="mysql" from="#266491" to="#143a58" /></defs>
          <rect x="3.300" y="7.300" width="46.700" height="46.700" rx="5" fill="url(#mysql)" stroke="#2d6f99" strokeWidth=".8" />
          <path d="M9 13q4-1 7.500 1.500 8 .5 12 9.500 3 6 4.500 11 1 2.500 5.500 4.500l5 2-4 1 6 4.500-7-3.500q-5 0-9-6-4-3-7.500-4-2.500 1-2.500 5-5-4-4.500-9.500-3-5-2-9.500-2.500-2-4-6.500z" fill="none" stroke="#eef5fa" strokeWidth="1.400" strokeLinejoin="round" />
          <circle cx="15" cy="19" r="1" fill="#eef5fa" />
          <path d="M37 11.500q-1.500 3.500 1.300 5l2.700.3 5.500 5q1.500-.5 1-2l-5-5q.3-4-4-4.500l1.500 3-1.500 1z" fill="#fff" />
        </Slot>
        <Slot running>
          <circle cx="24" cy="30.300" r="22" fill="#f7993a" />
          <circle cx="29" cy="30.300" r="21.700" fill="#2a2150" stroke="#20252c" strokeWidth="1" />
          <path d="M14 42q15 5 30 0-6 7-15 7t-15-7z" fill="#453a92" />
          <path d="M8 25.300h42.300M7.500 30.500h43.300M8 35.700h42.300" stroke="#fff" strokeWidth="2.800" />
        </Slot>
        <Slot>
          <rect x="3.700" y="9" width="45.600" height="44" rx="6" fill="#0768ae" />
          <rect x="3.700" y="7" width="45.600" height="43" rx="6" fill="#0a99de" />
          <rect x="8.700" y="12" width="35.600" height="32.500" rx="3" fill="#fff" />
          <path d="M12 16h12.500v5.500H18v13h6.500V40H12zM28.500 16H41v24H28.500v-5.500H35v-13h-6.500z" fill="#3b3b3b" />
        </Slot>
        <Slot running>
          <path d="M15 20q5 2 8.500 6l3 5q5-2 13-1-4 4-10 3.500L25 36l-7-1.500 3-2.500q-5-5-6-12z" fill="#7c2a1c" />
          <path d="M18 24l6 6 1 4-4-3z" fill="#f0503c" />
          <path d="M17.500 26l4 5.500" stroke="#e9c23c" strokeWidth="1.500" />
          <path d="M27 32q6-2 12-1.500-5 2.500-11 2.500z" fill="#d83c34" />
          <path d="M20 34.500l4-1 1 2z" fill="#fff" />
        </Slot>
        <span className="mt-[9px] ml-[12px] h-[47px] w-px shrink-0 bg-[#2e3236]" />
        <span className="w-[10px] shrink-0" />
        <Slot>
          <path d="M8 14h15l3 3h19.300v26H8z" fill="#62bfe6" />
          <path d="M14 9V6.300h14.500l9 9V20H14z" fill="#e8e8e8" />
          <path d="M11 11h20.500L42 22v30H11z" fill="#fbfbfb" />
          <path d="M31.500 11L42 22H33z" fill="#d4d4d4" />
          <path d="M18 23l17-2 1 13-17 3z" fill="#8b5e3c" />
          <path d="M15.500 25.500l16-1.500 1 13.500-16 1.500z" fill="#fff" />
          <path d="M17 27l13.500-1.200.8 10.500L18 37.500z" fill="#4178b8" />
          <path d="M17.500 32l13.300-1.300.5 5L18 37.500z" fill="#c5d6e6" />
          <circle cx="33.500" cy="35" r="4.300" fill="#8ea6b5" stroke="#444" strokeWidth="1.300" />
          <text x="26.700" y="50" fontSize="6" textAnchor="middle" fill="#777" fontFamily={sans}>JPEG</text>
        </Slot>
        <Slot>
          <defs><linearGradient id="trash" x1="0" y1="0" x2="1" y2="0"><stop offset="0" stopColor="#cfd1d5" /><stop offset=".4" stopColor="#eeeff1" /><stop offset="1" stopColor="#c9cbcf" /></linearGradient></defs>
          <path d="M9 12.500h35L40.300 48q-.5 4-13.800 4t-13.800-4z" fill="url(#trash)" />
          <ellipse cx="26.500" cy="12.500" rx="17.300" ry="3.200" fill="#c2c4c8" stroke="#f4f5f6" strokeWidth="1.200" />
        </Slot>
      </div>
    </div>
  );
}

export default function App() {
  return (
    <div className="h-[800px] w-[1280px] overflow-hidden bg-white">
      <MenuBar />
      <TitleBar />
      <AppMenu />
      <Toolbar />
      <div className="flex h-[40px] items-center border border-t-[#8c8c8c] border-r-[#4f6b75] border-b-[#4f6b75] border-l-[#8c8c8c] bg-[#add8e6] pt-px pl-[560px] shadow-[inset_1px_1px_0_#fff]">
        <Label w={163} className={"text-[25.500px] leading-[34px] font-bold text-[#4682b4] italic " + VERDANA}>CASH DESK</Label>
      </div>
      <CashTable />
      <div className="h-[112px] bg-[#066e95]" />
      <div className="flex h-[49px] items-start border-t-2 border-r border-l border-t-[#5d7179] border-r-white border-l-[#5d7f8b] bg-[#add8e6] pt-[4px] pl-[5px]">
        <div className="border-t-2 border-l-2 border-white">
          <button className={"flex h-[38px] w-[135px] items-center gap-[3px] pb-[2px] pl-[27px] text-[12px] leading-[34px] font-bold text-black " + metal + " " + ARIAL}>
            <svg className="h-[15px] w-[17px] shrink-0" viewBox="0 0 17 15">
              <path d="M.5 1h11v12.500H.5z" fill="#f4f6f8" stroke="#a7abb0" />
              <path d="M10.500 5h5v7l-2 1.500h-3" fill="#f4f6f8" stroke="#a7abb0" />
              <path d="M3 5h3M7 7h2M3 11h2" stroke="#a7abb0" />
              <path d="M2.500 9.500h9" stroke="#a9c6ea" strokeWidth="1.400" />
              <path d="M13 0v6.500M9.800 3.200h6.500" stroke="#1546a0" strokeWidth="2.200" />
            </svg>
            <Label w={59}>Yeni işlem</Label>
          </button>
        </div>
      </div>
      <Totals />
      <StatusBar />
      <Dock />
    </div>
  );
}
